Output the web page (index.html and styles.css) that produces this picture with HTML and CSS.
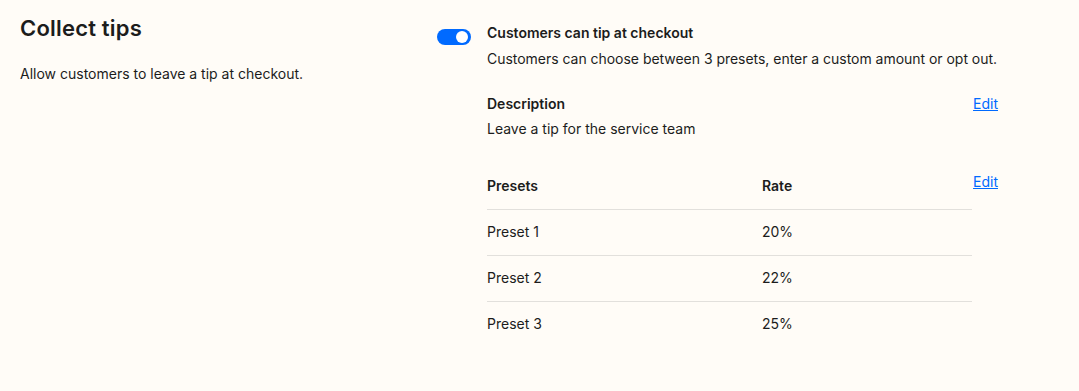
FILE: index.html
```html
<!DOCTYPE html>
<html>
<head>
    <title>Collect tips</title>
    <link rel="stylesheet" href="styles.css">
</head>
<body>
    <div class="container">
        <div class="intro">
            <h1 class="title">Collect tips</h1>
            <p class="intro-text">Allow customers to leave a tip at checkout.</p>
        </div>

        <div class="settings">
            <div class="toggle-row">
                <span class="toggle on"><span class="knob"></span></span>
                <div>
                    <div class="label">Customers can tip at checkout</div>
                    <div class="hint">Customers can choose between 3 presets, enter a custom amount or opt out.</div>
                </div>
            </div>

            <div class="details">
                <div class="field">
                    <div>
                        <div class="label">Description</div>
                        <div class="value">Leave a tip for the service team</div>
                    </div>
                    <a href="#" class="edit-link">Edit</a>
                </div>

                <div class="presets">
                    <table class="preset-table">
                        <thead>
                            <tr>
                                <th class="col-name">Presets</th>
                                <th>Rate</th>
                            </tr>
                        </thead>
                        <tbody>
                            <tr><td>Preset 1</td><td>20%</td></tr>
                            <tr><td>Preset 2</td><td>22%</td></tr>
                            <tr><td>Preset 3</td><td>25%</td></tr>
                        </tbody>
                    </table>
                    <a href="#" class="edit-link">Edit</a>
                </div>
            </div>
        </div>
    </div>
</body>
</html>
```

FILE: styles.css
```css
body {
    margin: 0;
    padding: 0;
    background: #fffcf7;
    font-family: Inter, "Noto Sans", sans-serif;
    font-size: 14px;
    line-height: 20px;
    color: #1c1c1c;
}

.container {
    display: grid;
    grid-template-columns: 417px 561px;
    padding: 14px 20px;
}

.title {
    margin: 0;
    font-size: 22px;
    line-height: 28px;
    font-weight: 600;
    letter-spacing: 0.2px;
}

.intro-text {
    margin: 22px 0 0;
}

.settings {
    margin-top: 9px;
}

.toggle-row {
    display: flex;
    align-items: flex-start;
    gap: 16px;
}

.toggle {
    flex: none;
    position: relative;
    width: 34px;
    height: 16px;
    margin-top: 6px;
    border-radius: 8px;
    background: #ccc;
}

.toggle.on {
    background: #006aff;
}

.knob {
    position: absolute;
    top: 2px;
    right: 3px;
    width: 12px;
    height: 12px;
    border-radius: 50%;
    background: #fff;
}

.label {
    font-weight: 600;
}

.hint {
    margin-top: 6px;
    white-space: nowrap;
    letter-spacing: -0.03px;
}

.details {
    padding-left: 50px;
}

.field {
    display: flex;
    justify-content: space-between;
    align-items: flex-start;
    margin-top: 25px;
}

.value {
    margin-top: 5px;
}

.edit-link {
    color: #006aff;
    text-decoration: underline;
}

.presets {
    display: flex;
    justify-content: space-between;
    align-items: flex-start;
    margin-top: 33px;
}

.preset-table {
    width: 485px;
    border-collapse: collapse;
}

.preset-table th,
.preset-table td {
    padding: 12px 0 13px;
    text-align: left;
    border-bottom: 1px solid #e2e0dc;
}

.preset-table th {
    padding: 4px 0 13px;
    font-weight: 600;
}

.preset-table .col-name {
    width: 275px;
}

.preset-table tr:last-child td {
    border-bottom: none;
}
```
